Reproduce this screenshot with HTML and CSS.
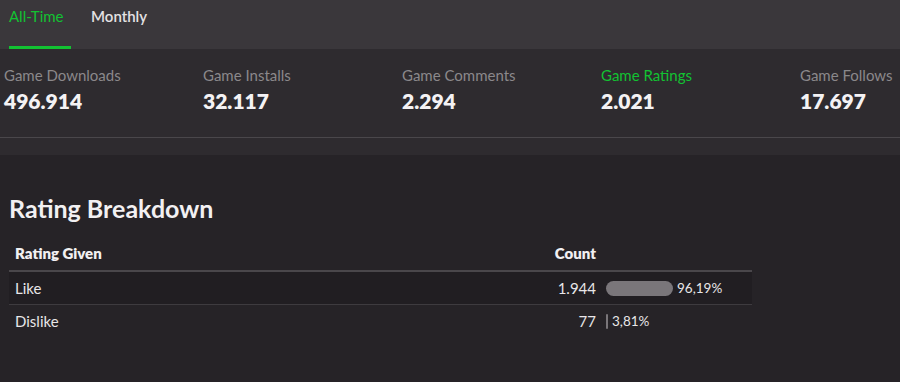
FILE: index.html
```html
<!DOCTYPE html>
<html lang="en">
<head>
    <meta charset="UTF-8">
    <meta name="viewport" content="width=device-width, initial-scale=1.0">
    <title>Game Stats</title>
    <link rel="stylesheet" href="styles.css">
</head>
<body>
    <div class="tabs">
        <a href="#" class="tab active">All-Time</a>
        <a href="#" class="tab">Monthly</a>
    </div>

    <div class="stats-wrap">
        <div class="stats">
            <div class="stat">
                <div class="stat-label">Game Downloads</div>
                <div class="stat-value">496.914</div>
            </div>
            <div class="stat">
                <div class="stat-label">Game Installs</div>
                <div class="stat-value">32.117</div>
            </div>
            <div class="stat">
                <div class="stat-label">Game Comments</div>
                <div class="stat-value">2.294</div>
            </div>
            <div class="stat selected">
                <div class="stat-label">Game Ratings</div>
                <div class="stat-value">2.021</div>
            </div>
            <div class="stat">
                <div class="stat-label">Game Follows</div>
                <div class="stat-value">17.697</div>
            </div>
        </div>
    </div>

    <div class="breakdown">
        <h2>Rating Breakdown</h2>
        <table class="rating-table">
            <thead>
                <tr>
                    <th class="col-name">Rating Given</th>
                    <th class="col-count">Count</th>
                    <th class="col-bar"></th>
                </tr>
            </thead>
            <tbody>
                <tr class="hover">
                    <td>Like</td>
                    <td class="col-count">1.944</td>
                    <td class="col-bar">
                        <div class="bar-cell">
                            <span class="bar" style="width: 67px;"></span>
                            <span class="pct">96,19%</span>
                        </div>
                    </td>
                </tr>
                <tr>
                    <td>Dislike</td>
                    <td class="col-count">77</td>
                    <td class="col-bar">
                        <div class="bar-cell">
                            <span class="bar" style="width: 2px;"></span>
                            <span class="pct">3,81%</span>
                        </div>
                    </td>
                </tr>
            </tbody>
        </table>
    </div>
</body>
</html>
```

FILE: styles.css
```css
body {
    font-family: Lato, "Open Sans", sans-serif;
    background-color: #262327;
    color: #e6e4e6;
    margin: 0;
    padding: 0;
    overflow: hidden;
}

.tabs {
    display: flex;
    gap: 20px;
    height: 49px;
    padding-left: 9px;
    background-color: #3a373b;
}

.tab {
    display: block;
    padding-top: 6px;
    line-height: 20px;
    height: 40px;
    border-bottom: 3px solid transparent;
    color: #e4e2e4;
    text-decoration: none;
    font-size: 15px;
    font-weight: 600;
}

.tab.active {
    color: #12c232;
    font-weight: 400;
    width: 62px;
    border-bottom-color: #12c232;
}

.stats-wrap {
    background-color: #2e2b2f;
    height: 106px;
    overflow: hidden;
}

.stats {
    display: flex;
    padding-left: 4px;
    padding-top: 16px;
    height: 72px;
    border-bottom: 1px solid #4a474b;
}

.stat {
    flex: 0 0 199px;
}

.stat-label {
    font-size: 15px;
    color: #8b888b;
    line-height: 20px;
}

.stat.selected .stat-label {
    color: #12c232;
}

.stat-value {
    font-size: 21px;
    font-weight: 800;
    color: #f4f2f4;
    line-height: 28px;
    margin-top: 2px;
}

.breakdown {
    padding: 36px 9px 0;
}

h2 {
    margin: 0 0 11px;
    font-size: 25px;
    font-weight: 700;
    color: #f2f0f2;
    line-height: 34px;
}

.rating-table {
    width: 743px;
    border-collapse: collapse;
    font-size: 15px;
}

.rating-table th {
    text-align: left;
    font-weight: 800;
    color: #f2f0f2;
    padding: 0 6px;
    height: 34px;
    border-bottom: 2px solid #4a474b;
    vertical-align: middle;
}

.rating-table td {
    height: 32px;
    padding: 0 6px;
    border-bottom: 1px solid #3e3b3f;
    color: #e8e6e8;
}

.rating-table tbody tr:last-child td {
    border-bottom: none;
}

.rating-table tr.hover td {
    background-color: #211e22;
}

.rating-table .col-name {
    width: 400px;
}

.rating-table .col-count {
    text-align: right;
    padding-right: 10px;
}

.rating-table .col-bar {
    width: 140px;
    padding-left: 0;
}

.bar-cell {
    display: flex;
    align-items: center;
    gap: 4px;
}

.bar {
    display: block;
    height: 15px;
    background-color: #7a767a;
    border-radius: 8px;
}

.pct {
    font-size: 13.5px;
}
```
